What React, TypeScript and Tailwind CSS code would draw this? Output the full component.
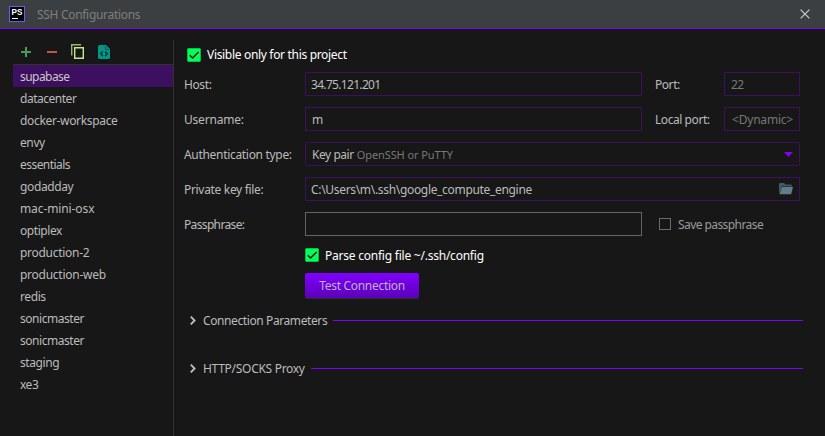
import type { ReactNode } from 'react';

type Host = { name: string; tracking: string };

const hosts: Host[] = [
  { name: 'supabase', tracking: 'tracking-[-0.55px]' },
  { name: 'datacenter', tracking: 'tracking-[-0.48px]' },
  { name: 'docker-workspace', tracking: 'tracking-[-0.33px]' },
  { name: 'envy', tracking: 'tracking-[-0.4px]' },
  { name: 'essentials', tracking: 'tracking-[-0.54px]' },
  { name: 'godadday', tracking: 'tracking-[-0.38px]' },
  { name: 'mac-mini-osx', tracking: 'tracking-[-0.1px]' },
  { name: 'optiplex', tracking: 'tracking-[-0.43px]' },
  { name: 'production-2', tracking: 'tracking-[-0.28px]' },
  { name: 'production-web', tracking: 'tracking-[-0.26px]' },
  { name: 'redis', tracking: 'tracking-[-0.4px]' },
  { name: 'sonicmaster', tracking: 'tracking-[-0.46px]' },
  { name: 'sonicmaster', tracking: 'tracking-[-0.46px]' },
  { name: 'staging', tracking: 'tracking-[-0.4px]' },
  { name: 'xe3', tracking: 'tracking-[-0.5px]' },
];

function TitleBar() {
  return (
    <header className="flex h-[29px] shrink-0 items-center border-b border-[#8000ff] bg-[#3c3f41] pl-[9px] pr-[15px]">
      <svg width="16" height="16" viewBox="0 0 16 16" className="shrink-0">
        <rect x="0.5" y="0.5" width="15" height="15" fill="#000" stroke="#6b57ff" />
        <text
          x="2.5"
          y="9.2"
          fill="#fff"
          fontSize="8.6"
          fontWeight="700"
          letterSpacing="0"
          fontFamily="Liberation Sans, sans-serif"
          textLength="10.8"
          lengthAdjust="spacingAndGlyphs"
        >
          PS
        </text>
        <rect x="3" y="12" width="6" height="1" fill="#fff" />
      </svg>
      <h1 className="ml-3 mt-[2px] tracking-[-0.31px] text-[#7c7e80]">SSH Configurations</h1>
      <svg width="10" height="10" viewBox="0 0 10 10" className="ml-auto" stroke="#c4c5c6" strokeWidth="1.3">
        <path d="M.6.6 9.4 9.4M9.4.6.6 9.4" />
      </svg>
    </header>
  );
}

function Toolbar() {
  return (
    <div className="flex h-6 items-center pl-2">
      <svg width="10" height="10" viewBox="0 0 10 10" fill="#499c54">
        <path d="M4 0h2v4h4v2H6v4H4V6H0V4h4z" />
      </svg>
      <svg width="10" height="2" viewBox="0 0 10 2" className="ml-4">
        <rect width="10" height="2" fill="#c75450" />
      </svg>
      <svg width="14" height="16" viewBox="0 0 14 16" className="ml-[14px]" fill="none" stroke="#c3e88d">
        <path d="M.7 11.5V.7H10" strokeWidth="1.4" opacity=".75" />
        <path d="M3.7 3.7h8.6v10.6H3.7z" strokeWidth="1.4" />
      </svg>
      <svg width="12" height="14" viewBox="0 0 12 14" className="ml-[13px]">
        <path d="M1.5 0H8l4 4v8.5q0 1.5-1.5 1.5h-9Q0 14 0 12.5v-11Q0 0 1.5 0z" fill="#009688" />
        <path d="M7.5 1v3.5H11" fill="none" stroke="#17433f" strokeWidth=".8" />
        <path d="M4.8 6.5 2.8 8.8l2 2.3M7.2 6.5l2 2.300-2 2.300" fill="none" stroke="#12302d" strokeWidth="1.500" />
      </svg>
    </div>
  );
}

function Sidebar() {
  return (
    <aside className="mt-[11px] w-[174px] shrink-0 border-r border-[#323232] pl-[13px]">
      <Toolbar />
      <ul className="border-t border-[#323232]">
        {hosts.map((h, i) => (
          <li
            key={i}
            className={`flex h-[22px] items-center pl-[7px] pt-[2px] ${h.tracking} ${i === 0 ? 'bg-[#3c0f5f] text-[#c8c8c8]' : ''}`}
          >
            {h.name}
          </li>
        ))}
      </ul>
    </aside>
  );
}

function Checked() {
  return (
    <svg width="14" height="14" viewBox="0 0 14 14" className="shrink-0">
      <rect x=".3" y=".3" width="13.4" height="13.4" rx="1" fill="#00ff58" />
      <path d="M2.7 7.2 5.600 10l6-6" fill="none" stroke="#171717" strokeWidth="1.500" />
    </svg>
  );
}

function Label({ children, className = '' }: { children: ReactNode; className?: string }) {
  return <span className={`w-[121px] shrink-0 whitespace-nowrap pt-[2px] ${className}`}>{children}</span>;
}

function Field({ children, className = '' }: { children?: ReactNode; className?: string }) {
  return (
    <div className={`flex h-6 items-center whitespace-nowrap border ${className}`}>{children}</div>
  );
}

function Section({ title, tracking }: { title: string; tracking: string }) {
  return (
    <div className="flex h-[17px] items-center pl-[6px] pr-[22px]">
      <svg width="6" height="9" viewBox="0 0 6 9" fill="none" stroke="#bbb" strokeWidth="1.9">
        <path d="M.8.6 4.600 4.500.8 8.400" />
      </svg>
      <span className={`ml-[7px] whitespace-nowrap pt-px ${tracking}`}>{title}</span>
      <span className="ml-[6px] h-0 flex-1 border-t border-[#8000ff]" />
    </div>
  );
}

function Form() {
  return (
    <main className="flex min-w-0 flex-1 flex-col pl-[10px] pt-[17px]">
      <div className="flex h-[18px] items-center pl-[3px] text-white">
        <Checked />
        <span className="ml-[6px] tracking-[-0.32px]">Visible only for this project</span>
      </div>
      <div className="mt-2 flex flex-col gap-[11px]">
        <div className="flex items-center">
          <Label className="tracking-[-0.4px]">Host:</Label>
          <Field className="w-[337px] border-[#3c0f5f] pl-[5px] pt-[2px] tracking-[-0.68px]">34.75.121.201</Field>
          <span className="ml-[13px] w-[69px] pt-[2px] tracking-[-0.45px]">Port:</span>
          <Field className="w-[76px] border-[#3c0f5f] pl-[6px] pt-[2px] tracking-[-0.5px] text-[#777]">22</Field>
        </div>
        <div className="flex items-center">
          <Label>Username:</Label>
          <Field className="w-[337px] border-[#3c0f5f] pl-[6px] pt-[2px]">m</Field>
          <span className="ml-[13px] w-[69px] whitespace-nowrap pt-[2px] tracking-[-0.44px]">Local port:</span>
          <Field className="w-[76px] border-[#3c0f5f] pl-[7px] pt-[2px] text-[#777]">&lt;Dynamic&gt;</Field>
        </div>
        <div className="flex items-center">
          <Label className="tracking-[-0.31px]">Authentication type:</Label>
          <Field className="w-[495px] rounded-[2px] border-[#3c0f5f] px-[6px]">
            <span className="pt-[2px] tracking-[-0.45px]">Key pair</span>
            <span className="ml-[3px] pt-[2px] text-[11px] tracking-[-0.1px] text-[#777]">OpenSSH or PuTTY</span>
            <svg width="9" height="5" viewBox="0 0 9 5" className="ml-auto">
              <path d="M0 0h9L4.5 5z" fill="#8000ff" />
            </svg>
          </Field>
        </div>
        <div className="flex items-center">
          <Label className="tracking-[-0.32px]">Private key file:</Label>
          <Field className="w-[495px] border-[#3c0f5f] pl-[5px] pr-[6px]">
            <span className="pt-[2px] tracking-[-0.32px]">C:\Users\m\.ssh\google_compute_engine</span>
            <svg width="14" height="12" viewBox="0 0 14 12" className="ml-auto">
              <path d="M0 11V1q0-1 1-1h4l1.5 1.5H12q.8 0 .8 1V4H3z" fill="#455a64" />
              <path d="M3 4h11l-1.8 7.3H.5z" fill="#607d8b" />
              <path d="M2.6 3.4H12" stroke="#20282c" strokeWidth=".8" />
            </svg>
          </Field>
        </div>
        <div className="flex items-center">
          <Label className="tracking-[-0.65px]">Passphrase:</Label>
          <Field className="w-[337px] border-[#646464]" />
          <span className="ml-[17px] size-3 border border-[#6b6b6b]" />
          <span className="ml-[7px] whitespace-nowrap pt-px tracking-[-0.57px] text-[#999]">Save passphrase</span>
        </div>
      </div>
      <div className="mt-[10px] flex h-[18px] items-center pl-[121px] text-white">
        <Checked />
        <span className="ml-[6px] pt-px tracking-[-0.23px]">Parse config file ~/.ssh/config</span>
      </div>
      <button className="ml-[121px] mt-[9px] h-[25px] w-[114px] whitespace-nowrap rounded-[2px] bg-linear-to-b from-[#8000ff] to-[#5c00b8] pt-px tracking-[-0.3px] text-[#c0b0d0] shadow-[0_1px_1px_#303030]">
        Test Connection
      </button>
      <div className="mt-[14px] flex flex-col gap-[31px]">
        <Section title="Connection Parameters" tracking="tracking-[-0.4px]" />
        <Section title="HTTP/SOCKS Proxy" tracking="tracking-[-0.29px]" />
      </div>
    </main>
  );
}

export default function App() {
  return (
    <div className="flex h-[436px] w-[825px] flex-col overflow-hidden bg-[#171717] font-['Noto_Sans','Open_Sans',sans-serif] text-[12px] leading-[16px] tracking-[-0.2px] text-[#bbb]">
      <TitleBar />
      <div className="flex min-h-0 flex-1">
        <Sidebar />
        <Form />
      </div>
    </div>
  );
}
